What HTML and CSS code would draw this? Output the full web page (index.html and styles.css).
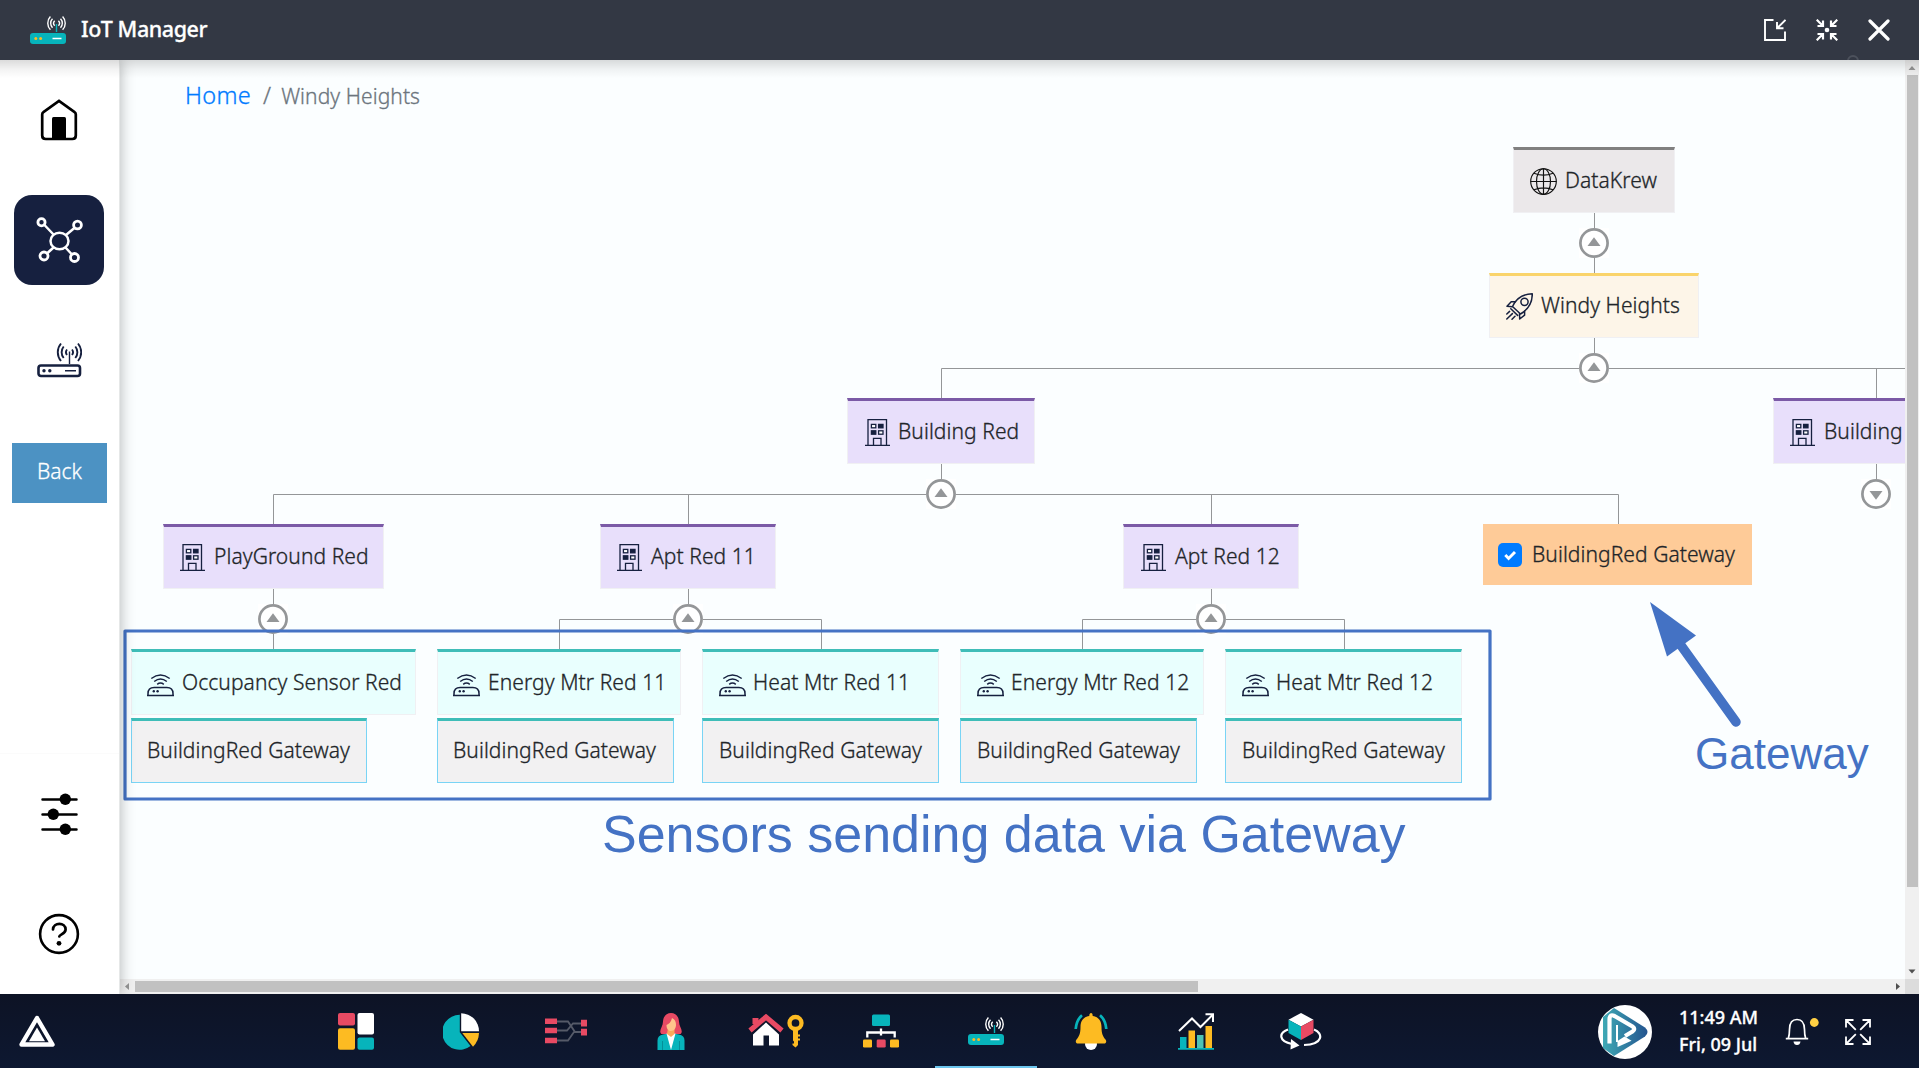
FILE: index.html
```html
<!DOCTYPE html>
<html lang="en">
<head>
<meta charset="utf-8">
<title>IoT Manager</title>
<link rel="stylesheet" href="styles.css">
</head>
<body>
<svg width="0" height="0" class="defs">
  <defs>
    <symbol id="router-color" viewBox="0 0 36 28">
      <path d="M26.5 16V8" stroke="#07b4bb" stroke-width="1.4"/>
      <rect x="0" y="17" width="36" height="11" rx="3" fill="#07b4bb"/>
      <circle cx="5.8" cy="22.5" r="1.5" fill="#fdbb22"/><circle cx="10.6" cy="22.5" r="1.5" fill="#fdbb22"/>
      <path d="M22.5 22.5H31.5" stroke="#fff" stroke-width="1.5"/>
      <path d="M24.6 4.8a3.6 3.6 0 0 0 0 5M28.3 4.8a3.6 3.6 0 0 1 0 5M22.4 2.8a6.5 6.5 0 0 0 0 9M30.4 2.8a6.5 6.5 0 0 1 0 9M20.3 .6a9.6 9.6 0 0 0 0 13.2M32.5 .6a9.6 9.6 0 0 1 0 13.2" transform="translate(.1 0)" fill="none" stroke="#fff" stroke-width="1.4"/>
    </symbol>
    <symbol id="globe" viewBox="0 0 27 27">
      <g fill="none" stroke="#111" stroke-width="1.15"><circle cx="13.5" cy="13.5" r="12.8"/><ellipse cx="13.5" cy="13.5" rx="7" ry="12.8"/><path d="M13.5 .5v26M.5 13.5h26M4 5.2q9.5 4 19 0M4 21.8q9.5-4 19 0"/></g>
    </symbol>
    <symbol id="rocket" viewBox="0 0 27 27">
      <g fill="none" stroke="#16203f" stroke-width="1.5" stroke-linejoin="round" stroke-linecap="round"><path d="M6.5 13.5C10 6 16 1 26.3 .8 26.3 11 21.5 17 14.5 21z"/><circle cx="18.5" cy="8.8" r="3.6"/><path d="M9.3 8.7H5.2L1 13.2l5.2.5M18.6 18v4.2L13.7 26l-.2-5.2M4.8 15.8l6.8 6.6M.8 21l2.8-2.6M.8 26l5.6-5.4M6 26.2l3-3"/></g>
    </symbol>
    <symbol id="building" viewBox="0 0 27 27">
      <path d="M4 26V.7h18.5V26M1 26.3h25M9.5 26v-6.700h7.500V26" fill="none" stroke="#16203f" stroke-width="1.3"/>
      <g stroke="#16203f" stroke-width="1.3"><rect x="7.400" y="5.400" width="4.400" height="3.400" fill="#fff"/><rect x="14.600" y="5.400" width="4.400" height="3.400" fill="#16203f"/><rect x="7.400" y="11.800" width="4.400" height="3.400" fill="#16203f"/><rect x="14.600" y="11.800" width="4.400" height="3.400" fill="#fff"/></g>
    </symbol>
    <symbol id="sensor" viewBox="0 0 27 27">
      <g fill="none" stroke="#16203f" stroke-width="1.5"><path d="M0 25.400H27M1 25v-1.500q0-6 6.200-6h12.600q6.200 0 6.200 6V25"/><path d="M4.300 8.500q9.200-7 18.400 0M7.200 11.500q6.300-5 12.600 0M10.200 14.300q3.300-2.500 6.600 0"/></g>
      <circle cx="6.800" cy="21.200" r="1.200" fill="#16203f"/><circle cx="10.600" cy="21.200" r="1.200" fill="#16203f"/>
    </symbol>
    <symbol id="toggle" viewBox="0 0 30 30">
      <rect width="30" height="30" fill="#fff"/><circle cx="15" cy="15" r="13.600" fill="#fff" stroke="#949698" stroke-width="2.700"/><path d="M15 9.200l6.500 8.800h-13z" fill="#949698"/>
    </symbol>
  </defs>
</svg>

<div class="shell">
  <header class="topbar">
    <svg class="logo" width="36" height="28"><use href="#router-color"/></svg>
    <h1 class="title">IoT Manager</h1>
    <div class="window-actions">
      <svg width="22" height="22" viewBox="0 0 22 22" fill="none" stroke="#fff" stroke-width="1.900"><path d="M9.500 1H1v20h20v-8.500M21.500 .8L13.300 9M13 3v6.200h6.500"/></svg>
      <svg width="22" height="22" viewBox="0 0 22 22" fill="none" stroke="#fff" stroke-width="2.200"><path d="M.7.7l6 6M7 1.500V7H1.500M21.300.7l-6 6M15 1.500V7h5.500M.7 21.300l6-6M7 20.500V15H1.500M21.300 21.300l-6-6M15 20.500V15h5.500"/><circle cx="11" cy="11" r="2.300" fill="#fff" stroke="none"/></svg>
      <svg width="22" height="22" viewBox="0 0 22 22" fill="none" stroke="#fff" stroke-width="3.200" stroke-linecap="round"><path d="M2 2l18 18M20 2L2 20"/></svg>
    </div>
    <span class="ripple"></span>
  </header>

  <div class="body">
    <nav class="sidebar">
      <a class="side-item"><svg width="38" height="42" viewBox="0 0 38 42"><path d="M2.200 15.500Q2.200 14 3.400 13.200L19 2 34.600 13.200q1.200.8 1.200 2.300V36.500q0 3.500-3.500 3.500H5.700q-3.500 0-3.500-3.500z" fill="none" stroke="#000" stroke-width="2.700"/><path d="M12 40V19.500q0-1.500 1.500-1.500h11q1.500 0 1.500 1.500V40z"/></svg></a>
      <a class="side-item"><span class="tile"><svg width="48" height="46" viewBox="0 0 48 46" fill="none" stroke="#fff"><g stroke-width="2.500"><ellipse cx="24.500" cy="24" rx="9" ry="8.300"/><path d="M18.500 17.500L9 7.500M31 18l9-7.500M18.500 30.500l-6 5.500M30.500 30.500l6 6.500"/></g><g stroke-width="2.800"><circle cx="6.500" cy="5.300" r="3.600"/><circle cx="42.500" cy="8" r="3.900"/><circle cx="9" cy="39" r="4"/><circle cx="39.500" cy="40.500" r="4"/></g></svg></span></a>
      <a class="side-item"><svg width="46" height="36" viewBox="0 0 46 36" fill="none" stroke="#16203f"><rect x="2.500" y="23.500" width="41.500" height="10.500" rx="2.500" stroke-width="2.600"/><path d="M33.500 22V9.500M29 28.700h11" stroke-width="1.400"/><path d="M31 7.500a4.500 4.500 0 0 0 0 5.500M36 7.500a4.500 4.500 0 0 1 0 5.500M27.700 4.500a9 9 0 0 0 0 11.500M39.300 4.500a9 9 0 0 1 0 11.500M25 1.500a13.500 13.500 0 0 0 0 17.500M42 1.500a13.500 13.500 0 0 1 0 17.500" stroke-width="1.900"/><g fill="#16203f" stroke="none"><circle cx="8" cy="28.700" r="1.700"/><circle cx="13.800" cy="28.700" r="1.700"/></g></svg></a>
      <button class="back">Back</button>
      <div class="side-bottom">
        <a class="side-item"><svg width="37" height="42" viewBox="0 0 37 42"><path d="M1.500 6.500h34M1.500 21.500h34M1.500 36.500h34" stroke="#000" stroke-width="2.500" stroke-linecap="round"/><circle cx="24.300" cy="6.200" r="5.700"/><circle cx="12.300" cy="21.200" r="5.700"/><circle cx="24.300" cy="36.200" r="5.700"/></svg></a>
        <a class="side-item"><svg width="42" height="42" viewBox="0 0 42 42" fill="none" stroke="#000" stroke-width="2.600"><circle cx="21" cy="21" r="18.900"/><path d="M15 16.500c.2-7.500 12.600-7.500 12.600 0 0 4.500-6.300 4.800-6.300 7" stroke-linecap="round" stroke-width="2.700"/><circle cx="21" cy="30.300" r="2.400" fill="#000" stroke="none"/></svg></a>
      </div>
    </nav>

    <main class="content">
      <div class="viewport">
        <nav class="crumbs"><a class="crumb-link">Home</a><span class="slash">/</span><span>Windy Heights</span></nav>

        <svg class="wires" width="1785" height="919" viewBox="120 60 1785 919" fill="none" stroke="#949698" stroke-width="1">
          <path d="M1594.500 213V273M1594.500 338V368M941.500 398V368.500H1905M1876.500 368V398M1876.500 464V494M941.500 464V494M273.500 524V494.500H1618.500V524M688.500 494V524M1211.500 494V524M273.500 589V649M688.500 589V619M559.500 649V619.500H821.500V649M1211.500 589V619M1082.500 649V619.500H1344.500V649"/>
          <g stroke="none">
            <use href="#toggle" x="1579" y="228" width="30" height="30"/>
            <use href="#toggle" x="1579" y="353" width="30" height="30"/>
            <use href="#toggle" x="926" y="479" width="30" height="30"/>
            <use href="#toggle" x="258" y="604" width="30" height="30"/>
            <use href="#toggle" x="673" y="604" width="30" height="30"/>
            <use href="#toggle" x="1196" y="604" width="30" height="30"/>
            <use href="#toggle" x="1861" y="479" width="30" height="30" transform="rotate(180 1876 494)"/>
          </g>
        </svg>

        <div class="node n-root"><svg class="ico"><use href="#globe"/></svg><span>DataKrew</span></div>
        <div class="node n-site"><svg class="ico"><use href="#rocket"/></svg><span>Windy Heights</span></div>
        <div class="node place n-red"><svg class="ico"><use href="#building"/></svg><span>Building Red</span></div>
        <div class="node place n-next"><svg class="ico"><use href="#building"/></svg><span>Building</span></div>
        <div class="node place n-play"><svg class="ico"><use href="#building"/></svg><span>PlayGround Red</span></div>
        <div class="node place n-apt11"><svg class="ico"><use href="#building"/></svg><span>Apt Red 11</span></div>
        <div class="node place n-apt12"><svg class="ico"><use href="#building"/></svg><span>Apt Red 12</span></div>
        <label class="gateway-pick"><span class="check"><svg width="24" height="24" viewBox="0 0 24 24"><path d="M7.300 12l3.300 3.500 6.400-6.500" fill="none" stroke="#fff" stroke-width="2.900"/></svg></span><span class="pick-label">BuildingRed Gateway</span></label>

        <div class="device d-occ"><div class="node sensor"><svg class="ico"><use href="#sensor"/></svg><span>Occupancy Sensor Red</span></div><div class="node via"><span>BuildingRed Gateway</span></div></div>
        <div class="device d-en11"><div class="node sensor"><svg class="ico"><use href="#sensor"/></svg><span>Energy Mtr Red 11</span></div><div class="node via"><span>BuildingRed Gateway</span></div></div>
        <div class="device d-ht11"><div class="node sensor"><svg class="ico"><use href="#sensor"/></svg><span>Heat Mtr Red 11</span></div><div class="node via"><span>BuildingRed Gateway</span></div></div>
        <div class="device d-en12"><div class="node sensor"><svg class="ico"><use href="#sensor"/></svg><span>Energy Mtr Red 12</span></div><div class="node via"><span>BuildingRed Gateway</span></div></div>
        <div class="device d-ht12"><div class="node sensor"><svg class="ico"><use href="#sensor"/></svg><span>Heat Mtr Red 12</span></div><div class="node via"><span>BuildingRed Gateway</span></div></div>

        <svg class="wires" width="1785" height="919" viewBox="120 60 1785 919">
          <rect x="125" y="631" width="1365" height="168" fill="none" stroke="#4472c4" stroke-width="3.200" stroke-linejoin="round"/>
          <path d="M1680 644L1736 722" stroke="#4472c4" stroke-width="9.500" stroke-linecap="round"/>
          <path d="M1650 602l46 33.500-29 21z" fill="#4472c4"/>
        </svg>
        <div class="note note-gateway">Gateway</div>
        <div class="note note-sensors">Sensors sending data via Gateway</div>
      </div>
      <div class="vbar"><svg width="14" height="15"><path d="M3.500 10h7L7 6z" fill="#949494"/></svg><span class="vthumb"></span><svg width="14" height="14"><path d="M3.500 4.500h7L7 8.500z" fill="#505050"/></svg></div>
      <div class="hbar"><svg width="15" height="15"><path d="M9 4v7L5 7.500z" fill="#949494"/></svg><span class="hthumb"></span><svg width="12" height="15"><path d="M3 4v7l4-3.500z" fill="#505050"/></svg></div>
      <div class="corner"></div>
    </main>
  </div>

  <footer class="taskbar">
    <svg class="start" width="36" height="32" viewBox="0 0 36 32"><path d="M18 3L33.500 29.500H2.500z" fill="none" stroke="#fff" stroke-width="4.400" stroke-linejoin="round"/><path d="M18 12.500L26 26.200H10z" fill="#fff"/></svg>
    <div class="apps">
      <a class="app"><svg width="36" height="37" viewBox="0 0 36 37"><rect width="17" height="12.500" rx="2" fill="#e84a63"/><rect x="19.500" width="16.500" height="21.500" rx="2" fill="#fff"/><rect y="15.300" width="17" height="21.500" rx="2" fill="#fdbb22"/><rect x="19.500" y="24.500" width="16.500" height="12.300" rx="2" fill="#07b4bb"/></svg></a>
      <a class="app"><svg width="36" height="37" viewBox="0 0 36 37"><path d="M16.800 1.800A17.500 17.500 0 1 0 27.500 33L16.800 19.300z" fill="#07b4bb"/><path d="M18.200 .2V18.300H36A18 18 0 0 0 18.200 .2z" fill="#fff"/><path d="M19.300 20H36q-.2 8-6 13.700z" fill="#fdbb22"/></svg></a>
      <a class="app"><svg width="42" height="26" viewBox="0 0 42 26"><path d="M11 3.500h12l7 10.500h7M11 12.500h11l6-7h9M11 22.500h12l6-8.500" fill="none" stroke="#555a68" stroke-width="1.800"/><path d="M0 .5h12v5.500H0zM0 9.800h12v5.500H0zM0 19.800h12v5.500H0zM36 1.800h6v6.700h-6zM36 10.700h6v6.700h-6z" fill="#e84a63"/></svg></a>
      <a class="app"><svg width="28" height="37" viewBox="0 0 28 37"><path d="M4.500 21C1 18 6 14 6 8.500 6.500 2.500 10 0 14 0s7.500 2.500 8 8.500C22 14 27 18 23.500 21z" fill="#e84a63"/><path d="M.5 37V27.500Q.5 22.500 6 21.500L14 20l8 1.500q5.500 1 5.500 6V37z" fill="#07b4bb"/><path d="M5.500 28v9M22.500 28v9" stroke="#058f98"/><path d="M9.500 20.500L14 37l4.500-16.500z" fill="#fff"/><path d="M11 15h6.500v6L14 24l-4-3z" fill="#fba95b"/><path d="M15 5c3 1.500 4 3.500 4 7 0 3-2 6-5 6s-4.500-2.500-4.500-6c2.500-1 4.500-3 5.500-7z" fill="#ffc58c"/></svg></a>
      <a class="app"><svg width="56" height="34" viewBox="0 0 56 34"><path d="M18 8.500L31 20.500V31.500H21V21.500H15.500v10H5v-11z" fill="#fff"/><path d="M4.500 4h6v6h-6z" fill="#e84a63"/><path d="M2 16.500L18 3l16 13.500" fill="none" stroke="#e84a63" stroke-width="5"/><circle cx="47.500" cy="9" r="6" fill="none" stroke="#fdbb22" stroke-width="4.300"/><path d="M45 15h5v16l-2.500 2.500L44.500 31v-1.500h1.500v-2l-1-1z" fill="#fdbb22"/><path d="M49.500 20.500H52v2h-2.500zM49.500 24.500H52v2h-2.500z" fill="#fdbb22"/></svg></a>
      <a class="app"><svg width="36" height="34" viewBox="0 0 36 34"><rect x="9" y=".5" width="18" height="11.500" rx="1.500" fill="#07b4bb"/><path d="M4.300 23.500V18.500H31.700V23.500M18 14.500v7" fill="none" stroke="#fff" stroke-width="2.300"/><rect y="25.500" width="9" height="8" rx="1.300" fill="#fdbb22"/><rect x="13.700" y="25.500" width="9" height="8" rx="1.300" fill="#e84a63"/><rect x="27" y="25.500" width="9" height="8" rx="1.300" fill="#fdbb22"/></svg></a>
      <a class="app active"><svg width="36" height="28"><use href="#router-color"/></svg></a>
      <a class="app"><svg width="34" height="37" viewBox="0 0 34 37"><circle cx="17" cy="31" r="6" fill="#fff"/><path d="M17 0q1.700 0 1.700 3C25 4 27.500 8.500 27.500 14c0 7 1.500 9.500 4 12.500 1.500 2 .5 4-1.500 4H4c-2 0-3-2-1.500-4 2.500-3 4-5.500 4-12.500C6.500 8.500 9 4 15.300 3 15.300 0 17 0 17 0z" fill="#fdbb22"/><path d="M8 2.200Q2.500 7 1.700 16M26 2.200Q31.500 7 32.300 16" fill="none" stroke="#07b4bb" stroke-width="2.700"/></svg></a>
      <a class="app"><svg width="36" height="37" viewBox="0 0 36 37"><path d="M2 24h6.500v11H2zM0 35h36v1.700H0z" fill="#07b4bb"/><path d="M10.500 17.500H17V35h-6.500zM27.500 13H34v22h-6.500z" fill="#fdbb22"/><path d="M19 22h6.500v13H19z" fill="#4ec3b4"/><path d="M1 18L14 5.500l8.500 8.500L34.500 2M27.500 1.300H35V9" fill="none" stroke="#fff" stroke-width="2"/></svg></a>
      <a class="app"><svg width="42" height="37" viewBox="0 0 42 37"><path d="M21 0l12.500 6.700L21 13.500 8.500 6.700z" fill="#fff"/><path d="M8.500 6.700L21 13.500V27L8.500 20z" fill="#07b4bb"/><path d="M33.500 6.700L21 13.500V27l12.500-7z" fill="#e84a63"/><path d="M8 16.500C-1.500 20-1.500 28 12 31M34 16.500c9.500 3.500 9.500 15-10 15.500" fill="none" stroke="#fff" stroke-width="2.200"/><path d="M11 26l8.500 6.500L10.500 36.500z" fill="#fff"/></svg></a>
    </div>
    <div class="status">
      <svg width="54" height="54" viewBox="0 0 54 54"><defs><linearGradient id="brand"><stop offset="0" stop-color="#3fa9b5"/><stop offset="1" stop-color="#24548f"/></linearGradient></defs><circle cx="27" cy="27" r="27" fill="#fff"/><path d="M5 12L16 3 47 22.500Q52 27 47 31.500L16 51 5 43z" fill="url(#brand)"/><g fill="none" stroke="#fff" stroke-linejoin="round"><path d="M11.500 38.500V14.500q0-6 5-3.500L34.500 21.500q3.500 2.500 0 5L27 31" stroke-width="4.200"/><path d="M19 37V20" stroke-width="2"/></g><path d="M19.500 42V36l7-4.500 7 4.300z" fill="#fff"/></svg>
      <div class="clock"><span>11:49 AM</span><span>Fri, 09 Jul</span></div>
      <svg class="bell" width="34" height="28" viewBox="0 0 34 28"><path d="M.8 20.700H23.200M3.300 20.500Q4.500 17 4.500 11.500C4.500 4.500 7.500 1.500 12 1.500s7.500 3 7.500 10q0 5.500 1.200 9" fill="none" stroke="#fff" stroke-width="1.700"/><path d="M8.500 23.500h7q-.5 3.500-3.500 3.500t-3.500-3.500z" fill="#fff"/><circle cx="29.300" cy="4.500" r="4.400" fill="#ffd044"/></svg>
      <svg width="26" height="26" viewBox="0 0 26 26" fill="none" stroke="#fff" stroke-width="1.800"><path d="M1 8.500V1h7.500M1 1l9.800 9.800M17.500 1H25v7.500M25 1l-9.800 9.800M1 17.500V25h7.500M1 25l9.800-9.800M25 17.500V25h-7.500M25 25l-9.800-9.800"/></svg>
    </div>
  </footer>
</div>
</body>
</html>
```
FILE: styles.css
```css
* { box-sizing: border-box; }
body {
  margin: 0;
  font-family: "Noto Sans", "Open Sans", sans-serif;
  font-weight: 300;
  font-size: 21px;
  letter-spacing: .07px;
  -webkit-text-stroke: .3px currentColor;
  color: #212529;
  overflow: hidden;
}
svg { display: block; flex: none; }
.defs { position: absolute; }
.shell {
  width: 100vw;
  height: 100vh;
  display: grid;
  grid-template-rows: 60px 1fr 74px;
}

/* Title bar */
.topbar {
  position: relative;
  z-index: 3;
  display: flex;
  align-items: center;
  padding: 0 29px 0 30px;
  background: #333844;
  overflow: hidden;
}
.title {
  margin: 0 0 2px 15px;
  font-size: 21.5px;
  font-weight: 500;
  line-height: 58px;
  letter-spacing: -.45px;
  color: #fff;
}
.window-actions { display: flex; gap: 30px; margin-left: auto; }
.ripple {
  position: absolute;
  left: 1847px;
  top: 55px;
  width: 12px;
  height: 12px;
  border: 2px solid #4c515c;
  border-radius: 50%;
}

.body {
  position: relative;
  display: grid;
  grid-template-columns: 120px 1fr;
  min-height: 0;
}
.body::before {
  content: "";
  position: absolute;
  inset: 0 0 auto 0;
  height: 18px;
  z-index: 2;
  background: linear-gradient(rgba(0,0,0,.14), rgba(0,0,0,.05) 50%, rgba(0,0,0,0));
}

/* Sidebar */
.sidebar {
  display: flex;
  flex-direction: column;
  background: #fff;
  border-right: 1px solid #e6e8e8;
  box-shadow: 0 0 14px rgba(0,0,0,.3);
  z-index: 1;
}
.side-item {
  width: 118px;
  height: 120px;
  display: flex;
  align-items: center;
  justify-content: center;
}
.tile {
  width: 90px;
  height: 90px;
  border-radius: 18px;
  background: #16203f;
  display: flex;
  align-items: center;
  justify-content: center;
}
.back {
  width: 95px;
  height: 60px;
  margin: 23px 0 0 12px;
  padding: 0 0 4px;
  border: 0;
  background: #4c92c3;
  color: #fff;
  font: inherit;
}
.side-bottom { margin-top: auto; border-top: 1px solid #fbfbfb; }

/* Content and scrollbars */
.content {
  display: grid;
  grid-template: 1fr 15px / 1fr 14px;
  min-width: 0;
  background: #fbfeff;
}
.viewport { position: relative; overflow: hidden; }
.vbar { display: flex; flex-direction: column; background: #f0f0f0; }
.vthumb { width: 11px; height: 812px; margin-left: 2px; background: #c1c1c1; }
.vbar svg:last-child { margin-top: auto; }
.hbar { display: flex; background: #f0f0f0; }
.hthumb { width: 1063px; height: 11px; margin-top: 2px; background: #c1c1c1; }
.hbar svg:last-child { margin-left: auto; }
.corner { background: #dcdcdc; }

.crumbs {
  display: flex;
  align-items: baseline;
  padding: 15px 0 0 65px;
  line-height: 40px;
  color: #6c757d;
}
.crumb-link { font-size: 23.5px; color: #007bff; letter-spacing: .3px; }
.slash { padding: 0 10px 0 12px; font-size: 23px; }

/* Tree canvas: nodes sit at their own coordinates */
.wires { position: absolute; left: 0; top: 0; }
.node {
  height: 66px;
  display: flex;
  align-items: center;
  gap: 8px;
  padding: 0 15px;
  border: 1px solid #f0f0f3;
  border-top: 3px solid;
  white-space: nowrap;
}
.node span { margin-bottom: 3px; }
.ico { width: 27px; height: 27px; }
.n-root, .n-site, .place, .device, .gateway-pick { position: absolute; }
.n-root { left: 1393px; top: 87px; width: 162px; padding-left: 16px; background: #ebe8ea; border-top-color: #808080; }
.n-site { left: 1369px; top: 213px; width: 210px; height: 65px; padding-left: 16px; background: #fdf5e8; border-top-color: #fad46b; }
.place { background: #e8dffb; border-top-color: #7b5aa6; }
.n-red { left: 727px; top: 338px; width: 188px; padding-left: 16px; gap: 7px; }
.n-next { left: 1653px; top: 338px; width: 207px; }
.n-play { left: 43px; top: 464px; width: 221px; height: 65px; }
.n-apt11 { left: 480px; top: 464px; width: 176px; height: 65px; }
.n-apt12 { left: 1003px; top: 464px; width: 176px; height: 65px; padding-left: 16px; }
.gateway-pick {
  left: 1363px;
  top: 464px;
  width: 269px;
  height: 61px;
  display: flex;
  align-items: center;
  gap: 10px;
  padding-left: 15px;
  background: #fecb98;
  white-space: nowrap;
}
.check { width: 24px; height: 24px; border-radius: 5px; background: #007bff; }
.pick-label { margin-bottom: 2px; }
.device { top: 589px; display: flex; flex-direction: column; gap: 3px; align-items: flex-start; }
.sensor { width: 100%; background: #e9fffe; border-top-color: #3fbdb8; }
.via { width: 237px; height: 65px; background: #f2f1f2; border-color: #3fbdb8 #79d4f5 #79d4f5; }
.d-occ { left: 11px; width: 285px; }
.d-occ .via { width: 236px; }
.d-en11 { left: 317px; width: 244px; }
.d-ht11 { left: 582px; width: 237px; }
.d-en12 { left: 840px; width: 244px; }
.d-ht12 { left: 1105px; width: 237px; }
.d-ht11 .node, .d-en12 .node, .d-ht12 .node { padding-left: 16px; }
.d-ht11 .sensor, .d-en12 .sensor, .d-ht12 .sensor { gap: 7px; }

.note {
  position: absolute;
  font-family: "Liberation Sans", Arial, sans-serif;
  font-weight: 400;
  line-height: 1;
  letter-spacing: 0;
  -webkit-text-stroke: 0;
  color: #4472c4;
  white-space: nowrap;
}
.note-gateway { left: 1575px; top: 672px; font-size: 44px; }
.note-sensors { left: 482px; top: 748px; font-size: 52px; }

/* Taskbar */
.taskbar {
  position: relative;
  z-index: 3;
  display: flex;
  align-items: center;
  padding-left: 19px;
  background: linear-gradient(#0d1325, #0d1831);
  color: #fff;
}
.apps { display: flex; gap: 3px; height: 74px; margin-left: 250px; }
.app {
  width: 102px;
  display: flex;
  align-items: center;
  justify-content: center;
  border-top: 2px solid transparent;
  border-bottom: 2px solid transparent;
}
.active { border-bottom-color: #6cc6ef; }
.status { display: flex; align-items: center; margin: 2px 48px 0 auto; }
.clock {
  display: flex;
  flex-direction: column;
  width: 80px;
  margin: 0 26px 3px 27px;
  font-size: 18px;
  font-weight: 500;
  line-height: 27px;
  letter-spacing: 0;
  white-space: nowrap;
}
.bell { margin-right: 26px; }
```
